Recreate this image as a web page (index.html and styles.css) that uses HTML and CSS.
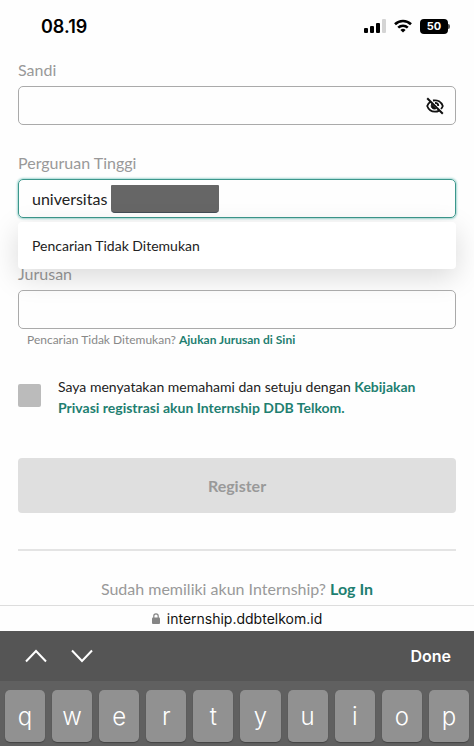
FILE: index.html
```html
<!DOCTYPE html>
<html lang="id">
<head>
  <meta charset="utf-8">
  <meta name="viewport" content="width=device-width, initial-scale=1">
  <title>Register - Internship</title>
  <link rel="stylesheet" href="styles.css">
</head>
<body>
  <!-- Status bar -->
  <header class="status-bar">
    <span class="clock">08.19</span>
    <div class="status-icons">
      <svg width="22" height="14" viewBox="0 0 22 14">
        <rect x="0" y="9" width="4" height="5" rx="1"/>
        <rect x="6" y="7" width="4" height="7" rx="1"/>
        <rect x="12" y="4" width="4" height="10" rx="1"/>
        <rect x="18" y="0" width="4" height="14" rx="1" fill="#d4d4d4"/>
      </svg>
      <svg width="18" height="14" viewBox="0 0 18 14" fill="none" stroke="#000" stroke-width="2.6">
        <path d="M1 5.2a11.5 11.5 0 0 1 16 0"/>
        <path d="M4.2 8.6a7 7 0 0 1 9.6 0"/>
        <path d="M9 13.6 6.4 11a3.8 3.8 0 0 1 5.2 0z" fill="#000" stroke="none"/>
      </svg>
      <span class="battery">50</span>
    </div>
  </header>

  <!-- Registration form -->
  <main class="content">
    <form id="register-form">
      <div class="field">
        <label for="password">Sandi</label>
        <div class="input-box">
          <input type="password" id="password">
          <button type="button" class="toggle-password" aria-label="Tampilkan sandi">
            <svg width="18" height="18" viewBox="0 0 18 18" fill="none" stroke="#111" stroke-width="1.8">
              <path d="M4.8 4.4C3 5.5 1.9 7 1.2 9c1.3 3.6 4.3 5.7 7.8 5.7 1.5 0 2.9-.4 4.1-1.1"/>
              <path d="M7 3.5c4.4-.9 8.3 1.4 9.8 5.5-.4 1.1-1 2.1-1.800 3"/>
              <path d="M5.600 7.200c-1.300 3 1.200 5.600 4.200 4.600z" fill="#111" stroke-width="1"/>
              <path d="M9 5.800c2 0 3.300 1.400 3.300 3.200"/>
              <path d="M1.200 1.200 16.800 16.800" stroke-width="2"/>
            </svg>
          </button>
        </div>
      </div>

      <div class="field field-search">
        <label for="university">Perguruan Tinggi</label>
        <div class="input-box focused">
          <input type="text" id="university" value="universitas">
          <span class="redacted"></span>
          <div class="dropdown">Pencarian Tidak Ditemukan</div>
        </div>
      </div>

      <div class="field field-major">
        <label for="major">Jurusan</label>
        <div class="input-box">
          <input type="text" id="major">
        </div>
        <p class="hint">Pencarian Tidak Ditemukan? <a href="#">Ajukan Jurusan di Sini</a></p>
      </div>

      <div class="agreement">
        <input type="checkbox" id="agree">
        <label for="agree">Saya menyatakan memahami dan setuju dengan <a href="#">Kebijakan Privasi registrasi akun Internship DDB Telkom.</a></label>
      </div>

      <button type="submit" class="register-btn" disabled>Register</button>
    </form>

    <hr>
    <p class="login">Sudah memiliki akun Internship? <a href="#">Log In</a></p>
  </main>

  <!-- Browser address bar -->
  <div class="address-bar">
    <svg width="8" height="11" viewBox="0 0 8 11">
      <rect x="0" y="4.5" width="8" height="6.5" rx="1" fill="#858585"/>
      <path d="M1.8 5V3a2.2 2.2 0 0 1 4.4 0v2" fill="none" stroke="#858585" stroke-width="1.2"/>
    </svg>
    <span>internship.ddbtelkom.id</span>
  </div>

  <!-- Keyboard -->
  <div class="keyboard">
    <div class="toolbar">
      <button type="button" aria-label="Sebelumnya">
        <svg width="22" height="14" viewBox="0 0 22 14"><path d="M1 12.5 11 2l10 10.5"/></svg>
      </button>
      <button type="button" aria-label="Berikutnya">
        <svg width="22" height="14" viewBox="0 0 22 14"><path d="M1 1.5 11 12 21 1.5"/></svg>
      </button>
      <button type="button" class="done">Done</button>
    </div>
    <div class="keys">
      <button type="button">q</button>
      <button type="button">w</button>
      <button type="button">e</button>
      <button type="button">r</button>
      <button type="button">t</button>
      <button type="button">y</button>
      <button type="button">u</button>
      <button type="button">i</button>
      <button type="button">o</button>
      <button type="button">p</button>
    </div>
  </div>
</body>
</html>
```

FILE: styles.css
```css
* {
  box-sizing: border-box;
}

body {
  margin: 0;
  background: #fefefe;
  color: #222;
  font-family: Lato, sans-serif;
  font-size: 16px;
}

button {
  border: none;
  padding: 0;
  background: none;
  font-family: inherit;
}

svg {
  display: block;
}

a {
  color: #1e7f71;
  font-weight: bold;
  text-decoration: none;
}

p {
  margin: 0;
}

/* Status bar */
.status-bar {
  display: flex;
  justify-content: space-between;
  align-items: center;
  height: 52px;
  padding: 0 24px 0 41px;
  color: #000;
  font-family: Inter, sans-serif;
}

.clock {
  font-size: 18px;
  font-weight: 600;
}

.status-icons {
  display: flex;
  align-items: center;
  gap: 8px;
}

.battery {
  position: relative;
  width: 28px;
  height: 15px;
  margin-right: 2px;
  border-radius: 4px;
  background: #000;
  color: #fff;
  font-size: 11px;
  font-weight: bold;
  line-height: 15px;
  text-align: center;
}

.battery::after {
  content: "";
  position: absolute;
  top: 5px;
  right: -2px;
  width: 2px;
  height: 5px;
  border-radius: 0 2px 2px 0;
  background: #555;
}

/* Form */
.content {
  padding: 6px 18px 0;
}

.field {
  margin-bottom: 26px;
}

.field label {
  display: block;
  margin-bottom: 4px;
  color: #999;
  line-height: 24px;
}

.input-box {
  position: relative;
  display: flex;
  align-items: center;
  height: 39px;
  padding: 0 11px 0 13px;
  border: 1px solid #aaa;
  border-radius: 5px;
}

.input-box input {
  flex: 1;
  min-width: 0;
  border: none;
  outline: none;
  padding: 0;
  background: none;
  color: #222;
  font-family: inherit;
  font-size: 16px;
}

.focused {
  border-color: #3c978c;
  box-shadow: 0 0 2px 1px #a5d8d3;
}

.field-search {
  margin-bottom: 44px;
}

.redacted {
  position: absolute;
  top: 5px;
  left: 92px;
  width: 108px;
  height: 28px;
  border-radius: 1px 1px 4px 4px;
  background: #666;
  border-bottom: 1px solid #444c55;
}

.dropdown {
  position: absolute;
  top: 42px;
  left: -1px;
  right: -1px;
  padding: 0 14px;
  border-radius: 4px;
  background: #fff;
  box-shadow: 0 8px 28px rgba(0, 0, 0, 0.15);
  font-size: 14px;
  line-height: 47px;
}

.hint {
  padding: 0 9px;
  color: #888;
  font-size: 12px;
  line-height: 21px;
}

.agreement {
  display: flex;
  align-items: center;
  gap: 17px;
  margin-bottom: 40px;
  font-size: 14px;
  line-height: 21px;
}

.agreement input {
  appearance: none;
  flex: none;
  width: 23px;
  height: 23px;
  margin: 0 0 4px;
  border-radius: 2px;
  background: #bbb;
}

.register-btn {
  width: 100%;
  height: 55px;
  border-radius: 4px;
  background: #dfdfdf;
  color: #999;
  font-size: 16px;
  font-weight: bold;
}

hr {
  margin: 36px 0 26px;
  border: none;
  border-top: 2px solid #e4e4e4;
}

.login {
  color: #999;
  line-height: 24px;
  text-align: center;
}

/* Address bar */
.address-bar {
  display: flex;
  justify-content: center;
  align-items: center;
  gap: 7px;
  height: 26px;
  margin-top: 4px;
  border-top: 1px solid #ddd;
  color: #111;
  font-family: Inter, sans-serif;
  font-size: 14px;
}

/* Keyboard */
.keyboard {
  background: #606060;
  font-family: Inter, sans-serif;
}

.toolbar {
  display: flex;
  align-items: center;
  gap: 24px;
  height: 50px;
  padding: 0 23px 0 25px;
  background: #555;
}

.toolbar path {
  fill: none;
  stroke: #fff;
  stroke-width: 2;
}

.toolbar .done {
  margin-left: auto;
  color: #fff;
  font-size: 16px;
  font-weight: 600;
}

.keys {
  display: flex;
  gap: 7px;
  padding: 9px 5px 5px;
}

.keys button {
  flex: 1;
  height: 52px;
  border-radius: 5px;
  background: #919191;
  box-shadow: 0 1px 1px #444;
  color: #fff;
  font-size: 24px;
  font-weight: 300;
}
```
